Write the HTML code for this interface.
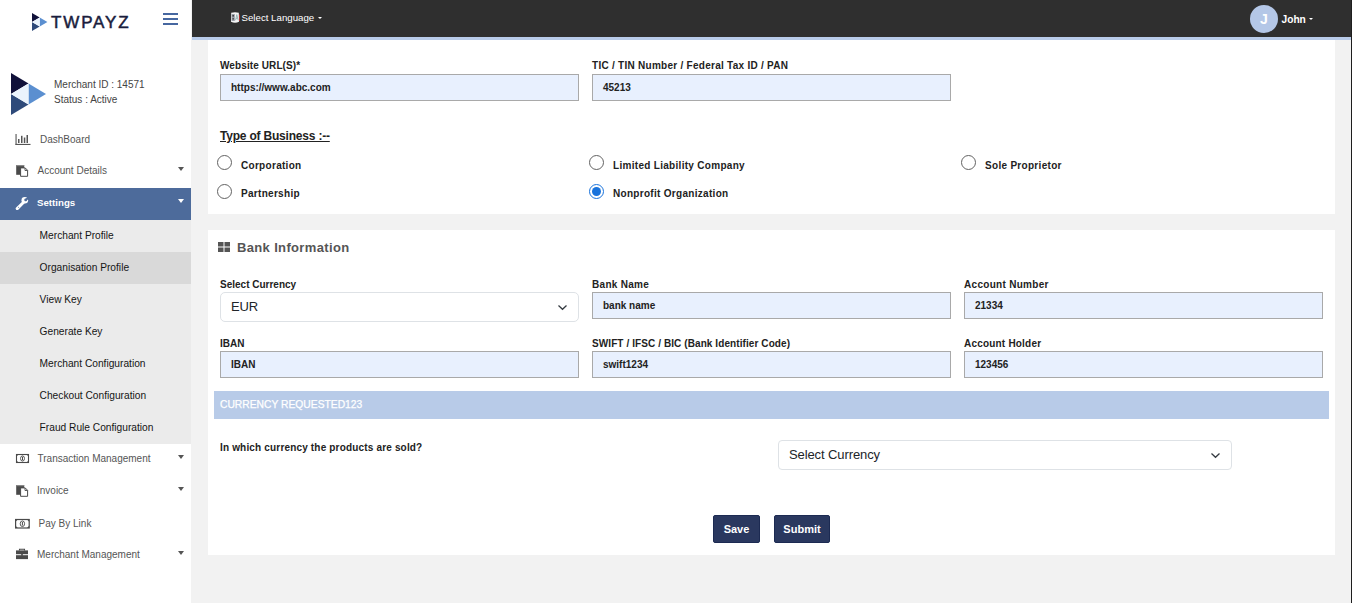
<!DOCTYPE html>
<html><head><meta charset="utf-8">
<style>
*{box-sizing:border-box;margin:0;padding:0}
html,body{width:1352px;height:603px;overflow:hidden;background:#f2f2f2;font-family:"Liberation Sans",sans-serif}
.a{position:absolute;white-space:nowrap}
#side{position:absolute;left:0;top:0;width:191px;height:603px;background:#fff}
#hdr{position:absolute;left:192px;top:0;width:1160px;height:37px;background:#2f2f2f}
#hline{position:absolute;left:192px;top:37px;width:1159px;height:3px;background:#b8cbe9}
.card{position:absolute;background:#fff}
.lbl{position:absolute;font-size:10px;font-weight:bold;color:#222;white-space:nowrap}
.inp{position:absolute;height:27px;background:#e8f0fe;border:1px solid #a9a9a9;font-size:10px;font-weight:bold;color:#222;padding-left:10px;line-height:25px;white-space:nowrap}
.mi{position:absolute;left:0;width:191px;font-size:11px;color:#555}
.sub{position:absolute;left:39.6px;font-size:10.2px;color:#151515;white-space:nowrap}
.caret{position:absolute;width:0;height:0;border-left:3.5px solid transparent;border-right:3.5px solid transparent;border-top:4px solid #555}
.radio{position:absolute;width:15px;height:15px;border:1.4px solid #626262;border-radius:50%;background:#fff}
.rl{position:absolute;font-size:10px;font-weight:bold;color:#222;letter-spacing:0.3px;white-space:nowrap}
</style></head><body>
<div id="side">
  <!-- small logo -->
  <svg class="a" style="left:31.5px;top:13px" width="16" height="18" viewBox="0 0 16 18">
    <polygon points="0,0 0,9 7.7,4.5" fill="#10113a"/>
    <polygon points="0,9 0,18 7.7,13.5" fill="#2e4a7a"/>
    <polygon points="7.7,4.5 7.7,13.5 15.4,9" fill="#5b8fd0"/>
    <polygon points="0,9 7.7,4.5 7.7,13.5" fill="#eaf3fc"/>
  </svg>
  <div class="a" style="left:51px;top:13px;font-size:17px;letter-spacing:1.85px;color:#1a1d3d;-webkit-text-stroke:0.5px #1a1d3d">TWPAYZ</div>
  <!-- hamburger -->
  <div class="a" style="left:163px;top:13px;width:15px;height:2px;background:#4667a0"></div>
  <div class="a" style="left:163px;top:18px;width:15px;height:2px;background:#4667a0"></div>
  <div class="a" style="left:163px;top:23px;width:15px;height:2px;background:#4667a0"></div>
  <!-- big logo -->
  <svg class="a" style="left:11px;top:73px" width="35" height="42" viewBox="0 0 35 42">
    <polygon points="0,0 0,21 17.5,10.5" fill="#10113a"/>
    <polygon points="0,21 0,42 17.5,31.5" fill="#2e4a7a"/>
    <polygon points="17.5,10.5 17.5,31.5 35,21" fill="#5b8fd0"/>
    <polygon points="0,21 17.5,10.5 17.5,31.5" fill="#eaf3fc"/>
  </svg>
  <div class="a" style="left:54px;top:79px;font-size:10px;color:#444">Merchant ID : 14571</div>
  <div class="a" style="left:54px;top:94px;font-size:10px;color:#444">Status : Active</div>

  <div class="a" style="left:40px;top:134px;font-size:10px;color:#555">DashBoard</div>
  <div class="a" style="left:37.5px;top:165px;font-size:10px;color:#555">Account Details</div>
  <div class="caret" style="left:178px;top:167px"></div>
  <div class="a" style="left:0;top:188px;width:191px;height:32px;background:#4d6b9b"></div>
  <div class="a" style="left:37px;top:197.3px;font-size:9.7px;color:#fff;font-weight:bold">Settings</div>
  <div class="caret" style="left:178px;top:199px;border-top-color:#fff"></div>
  <div class="a" style="left:0;top:220px;width:191px;height:224px;background:#ebebeb"></div>
  <div class="a" style="left:0;top:252px;width:191px;height:32px;background:#d9d9d9"></div>
  <div class="sub" style="top:230px">Merchant Profile</div>
  <div class="sub" style="top:262px">Organisation Profile</div>
  <div class="sub" style="top:294px">View Key</div>
  <div class="sub" style="top:326px">Generate Key</div>
  <div class="sub" style="top:358px">Merchant Configuration</div>
  <div class="sub" style="top:390px">Checkout Configuration</div>
  <div class="sub" style="top:422px">Fraud Rule Configuration</div>
  <div class="a" style="left:37.5px;top:453px;font-size:10px;color:#555">Transaction Management</div>
  <div class="caret" style="left:178px;top:455px"></div>
  <div class="a" style="left:37px;top:485px;font-size:10px;color:#555">Invoice</div>
  <div class="caret" style="left:178px;top:487px"></div>
  <div class="a" style="left:38.6px;top:518px;font-size:10px;color:#555">Pay By Link</div>
  <div class="a" style="left:37px;top:549px;font-size:10px;color:#555">Merchant Management</div>
  <div class="caret" style="left:178px;top:551px"></div>
  <!-- dashboard icon -->
  <svg class="a" style="left:15px;top:134px" width="16" height="11" viewBox="0 0 16 11">
    <rect x="0.5" y="0" width="1.1" height="11" fill="#555"/>
    <rect x="0.5" y="9.9" width="15" height="1.1" fill="#555"/>
    <rect x="3" y="5" width="1.5" height="4" fill="#555"/>
    <rect x="6" y="1.8" width="1.5" height="7.2" fill="#555"/>
    <rect x="8.8" y="3.5" width="1.5" height="5.5" fill="#555"/>
    <rect x="11.5" y="1" width="1.5" height="8" fill="#555"/>
  </svg>
  <!-- account details icon -->
  <svg class="a" style="left:15px;top:164px" width="14" height="13" viewBox="0 0 14 13">
    <rect x="1.2" y="1" width="8" height="9.8" fill="#4a4a4a"/>
    <rect x="1.2" y="1" width="8" height="1.2" fill="#888"/>
    <path d="M5.6 3.9 H10.2 L12.6 6.3 V12.3 H5.6 Z" fill="#fff" stroke="#4a4a4a" stroke-width="1"/>
    <path d="M10 4 V6.5 H12.5" fill="none" stroke="#4a4a4a" stroke-width="0.9"/>
  </svg>
  <!-- wrench -->
  <svg class="a" style="left:15px;top:196px" width="14" height="14" viewBox="0 0 14 14">
    <path d="M2.2 12.6 L8.6 6.2" stroke="#fff" stroke-width="3" stroke-linecap="round"/>
    <circle cx="9.8" cy="4.3" r="3.3" fill="#fff"/>
    <path d="M9.6 3.7 L12.6 0.8 L14 2.6 L11 5.2 Z" fill="#4d6b9b"/>
    <circle cx="10.6" cy="3.9" r="1.3" fill="#4d6b9b"/>
    <circle cx="3.6" cy="11.2" r="0.5" fill="#4d6b9b"/>
  </svg>
  <!-- money icon TM -->
  <svg class="a" style="left:15px;top:453px" width="15" height="11" viewBox="0 0 15 11">
    <rect x="1.5" y="1.5" width="12" height="8" fill="#fff" stroke="#4a4a4a" stroke-width="1.1"/>
    <path d="M1.5 1.5 h2 l-2 2 z M13.5 1.5 h-2 l2 2 z M1.5 9.5 h2 l-2 -2 z M13.5 9.5 h-2 l2 -2 z" fill="#4a4a4a"/>
    <ellipse cx="7.5" cy="5.5" rx="2" ry="2.6" fill="none" stroke="#4a4a4a" stroke-width="0.9"/>
    <rect x="7" y="3.8" width="1" height="3.4" fill="#4a4a4a"/>
  </svg>
  <!-- invoice icon -->
  <svg class="a" style="left:15px;top:484px" width="14" height="13" viewBox="0 0 14 13">
    <rect x="1.2" y="1" width="8" height="9.8" fill="#4a4a4a"/>
    <rect x="1.2" y="1" width="8" height="1.2" fill="#888"/>
    <path d="M5.6 3.9 H10.2 L12.6 6.3 V12.3 H5.6 Z" fill="#fff" stroke="#4a4a4a" stroke-width="1"/>
    <path d="M10 4 V6.5 H12.5" fill="none" stroke="#4a4a4a" stroke-width="0.9"/>
  </svg>
  <!-- money icon PBL -->
  <svg class="a" style="left:14px;top:518px" width="17" height="11" viewBox="0 0 17 11">
    <rect x="1.6" y="1.5" width="13.6" height="8.5" fill="#fff" stroke="#4a4a4a" stroke-width="1.2"/>
    <path d="M1.6 1.5 h2.2 l-2.2 2.2 z M15.2 1.5 h-2.2 l2.2 2.2 z M1.6 10 h2.2 l-2.2 -2.2 z M15.2 10 h-2.2 l2.2 -2.2 z" fill="#4a4a4a"/>
    <ellipse cx="8.4" cy="5.75" rx="2.2" ry="2.8" fill="none" stroke="#4a4a4a" stroke-width="0.9"/>
    <rect x="7.9" y="4" width="1" height="3.5" fill="#4a4a4a"/>
  </svg>
  <!-- briefcase -->
  <svg class="a" style="left:15px;top:548px" width="14" height="12" viewBox="0 0 14 12">
    <path d="M4.5 2.6 V1.3 H9.5 V2.6" fill="none" stroke="#4a4a4a" stroke-width="1.1"/>
    <rect x="1" y="2.4" width="12" height="3.8" fill="#4a4a4a"/>
    <rect x="1" y="7.2" width="12" height="3.9" fill="#4a4a4a"/>
    <rect x="6.2" y="5.6" width="1.6" height="2.2" fill="#4a4a4a"/>
  </svg>
</div>

<div id="hdr">
  <svg class="a" style="left:38px;top:11px" width="11" height="13" viewBox="0 0 11 13">
    <path d="M1.2 1.8 Q5 0.8 8.8 1.8 L9 10.8 Q5 12.6 1 10.8 Z" fill="#f4f4f4"/>
    <rect x="1.6" y="3" width="3.2" height="7" fill="#9aa0aa"/>
    <rect x="2.4" y="4" width="1.6" height="1.6" fill="#444"/>
    <rect x="2.4" y="7" width="1.6" height="1.6" fill="#555"/>
    <path d="M5.6 9.2 L6.8 3.6 L8.2 9.2 M6 7.3 H7.6" fill="none" stroke="#8aa" stroke-width="0.8"/>
    <rect x="9" y="3.5" width="0.9" height="6.5" fill="#b33"/>
  </svg>
  <div class="a" style="left:49.5px;top:11.9px;font-size:9.7px;color:#fff">Select Language</div>
  <div class="caret" style="left:126px;top:17px;border-top-color:#fff;border-width:2px 2px 0 2px"></div>
  <div class="a" style="left:1058px;top:5px;width:28px;height:28px;border-radius:50%;background:#b4c7e7;color:#fff;font-weight:bold;font-size:14px;text-align:center;line-height:28px">J</div>
  <div class="a" style="left:1089.5px;top:14px;font-size:10.2px;font-weight:bold;color:#fff">John</div>
  <div class="caret" style="left:1117px;top:18px;border-top-color:#fff;border-width:2px 2px 0 2px"></div>
</div>
<div id="hline"></div>

<!-- card 1 -->
<div class="card" style="left:208px;top:40px;width:1127px;height:174px"></div>
<div class="lbl" style="left:220px;top:60px;letter-spacing:0.1px">Website URL(S)*</div>
<div class="inp" style="left:220px;top:74px;width:359px">https://www.abc.com</div>
<div class="lbl" style="left:592px;top:60px;letter-spacing:0.27px">TIC / TIN Number / Federal Tax ID / PAN</div>
<div class="inp" style="left:592px;top:74px;width:359px">45213</div>
<div class="a" style="left:220px;top:129px;font-size:12px;font-weight:bold;color:#222;letter-spacing:-0.2px;text-decoration:underline">Type of Business :--</div>
<div class="radio" style="left:217px;top:155px"></div>
<div class="rl" style="left:241px;top:160px">Corporation</div>
<div class="radio" style="left:217px;top:184px"></div>
<div class="rl" style="left:241px;top:188px">Partnership</div>
<div class="radio" style="left:589px;top:155px"></div>
<div class="rl" style="left:613px;top:160px">Limited Liability Company</div>
<div class="radio" style="left:589px;top:184px;border:1.7px solid #1973dc"></div>
<div class="a" style="left:591.9px;top:186.9px;width:9.2px;height:9.2px;border-radius:50%;background:#1973dc"></div>
<div class="rl" style="left:613px;top:188px">Nonprofit Organization</div>
<div class="radio" style="left:961px;top:155px"></div>
<div class="rl" style="left:985px;top:160px">Sole Proprietor</div>

<!-- card 2 -->
<div class="card" style="left:208px;top:230px;width:1127px;height:325px"></div>
<svg class="a" style="left:218px;top:242px" width="12" height="10" viewBox="0 0 12 10">
  <rect x="0" y="0" width="5.5" height="4.5" fill="#555"/><rect x="6.5" y="0" width="5.5" height="4.5" fill="#555"/>
  <rect x="0" y="5.5" width="5.5" height="4.5" fill="#555"/><rect x="6.5" y="5.5" width="5.5" height="4.5" fill="#555"/>
</svg>
<div class="a" style="left:237px;top:240px;font-size:13px;font-weight:bold;color:#555;letter-spacing:0.35px">Bank Information</div>
<div class="lbl" style="left:220px;top:279px">Select Currency</div>
<div class="a" style="left:220px;top:292px;width:359px;height:30px;border:1px solid #dee2e6;border-radius:5px;background:#fff;font-size:13px;color:#212529;padding-left:10px;line-height:27px;letter-spacing:-0.1px">EUR</div>
<svg class="a" style="left:557px;top:303.5px" width="11" height="7" viewBox="0 0 11 7"><path d="M1.5 1.5 L5.5 5.3 L9.5 1.5" fill="none" stroke="#343a40" stroke-width="1.25"/></svg>
<div class="lbl" style="left:592px;top:279px;letter-spacing:0.3px">Bank Name</div>
<div class="inp" style="left:592px;top:292px;width:359px">bank name</div>
<div class="lbl" style="left:964px;top:279px;letter-spacing:0.3px">Account Number</div>
<div class="inp" style="left:964px;top:292px;width:359px">21334</div>
<div class="lbl" style="left:220px;top:338px">IBAN</div>
<div class="inp" style="left:220px;top:351px;width:359px">IBAN</div>
<div class="lbl" style="left:592px;top:338px;letter-spacing:0.09px">SWIFT / IFSC / BIC (Bank Identifier Code)</div>
<div class="inp" style="left:592px;top:351px;width:359px">swift1234</div>
<div class="lbl" style="left:964px;top:338px;letter-spacing:0.2px">Account Holder</div>
<div class="inp" style="left:964px;top:351px;width:359px">123456</div>
<div class="a" style="left:214px;top:391px;width:1115px;height:28px;background:#b8cbe8"></div>
<div class="a" style="left:220px;top:399px;font-size:10.3px;color:#fff;-webkit-text-stroke:0.25px #fff">CURRENCY REQUESTED123</div>
<div class="lbl" style="left:220px;top:442px;letter-spacing:0.17px">In which currency the products are sold?</div>
<div class="a" style="left:778px;top:440px;width:454px;height:30px;border:1px solid #dee2e6;border-radius:4px;background:#fff;font-size:13px;color:#212529;padding-left:10px;line-height:27.5px;letter-spacing:-0.1px">Select Currency</div>
<svg class="a" style="left:1210px;top:451.5px" width="11" height="7" viewBox="0 0 11 7"><path d="M1.5 1.5 L5.5 5.3 L9.5 1.5" fill="none" stroke="#343a40" stroke-width="1.25"/></svg>
<div class="a" style="left:713px;top:515px;width:47px;height:28px;background:#2a385f;border:1px solid #1c2a52;border-radius:2px;color:#fff;font-weight:bold;font-size:11px;text-align:center;line-height:26px">Save</div>
<div class="a" style="left:774px;top:515px;width:56px;height:28px;background:#2a385f;border:1px solid #1c2a52;border-radius:2px;color:#fff;font-weight:bold;font-size:11px;text-align:center;line-height:26px">Submit</div>
<div class="a" style="left:1351px;top:0;width:1px;height:603px;background:#1e1e1e"></div>
</body></html>
